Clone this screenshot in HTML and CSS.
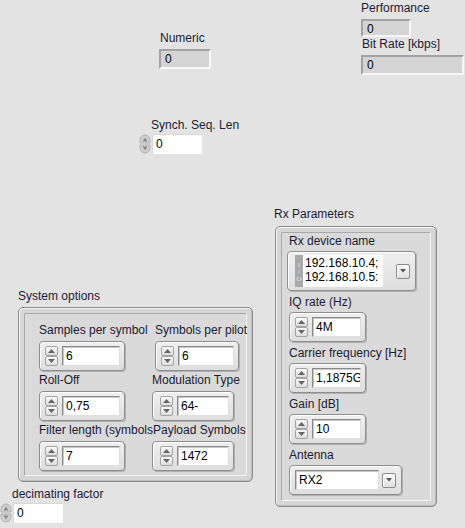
FILE: index.html
```html
<!DOCTYPE html>
<html>
<head>
<meta charset="utf-8">
<link rel="stylesheet" href="styles.css">
</head>
<body>
<div class="panel">

  <div class="item pos-numeric">
    <div class="label">Numeric</div>
    <div class="ind ind-numeric">0</div>
  </div>

  <div class="item pos-perf">
    <div class="label">Performance</div>
    <div class="ind ind-perf">0</div>
    <div class="label lbl-bitrate">Bit Rate [kbps]</div>
    <div class="ind ind-bitrate">0</div>
  </div>

  <div class="item pos-synch">
    <div class="label lbl-classic">Synch. Seq. Len</div>
    <div class="classic">
      <svg class="cspin" width="12" height="20" viewBox="0 0 12 20">
        <path d="M1 9 V6 A5 5 0 0 1 11 6 V9 Z" fill="#cfcfcf" stroke="#b4b4b4"/>
        <path d="M1 11 V14 A5 5 0 0 0 11 14 V11 Z" fill="#cfcfcf" stroke="#b4b4b4"/>
        <path d="M3.5 7.5 L6 3.5 L8.5 7.5 Z" fill="#8a8a8a"/>
        <path d="M3.5 12.5 L6 16.5 L8.5 12.5 Z" fill="#8a8a8a"/>
      </svg>
      <div class="cfield">0</div>
    </div>
  </div>

  <div class="item pos-rx">
    <div class="label">Rx Parameters</div>
    <div class="cluster rx-cluster">
      <div class="cluster-inner rx-inner">
        <div class="label lbl-first">Rx device name</div>
        <div class="ctl ctl-dev">
          <div class="io"><span class="io-txt">I/O</span></div>
          <div class="field field-dev">192.168.10.4;<br>192.168.10.5:</div>
          <div class="drop"><svg width="6" height="4" viewBox="0 0 6 4"><path d="M0 0 H6 L3 3.5 Z" fill="#555"/></svg></div>
        </div>

        <div class="label lbl-gap">IQ rate (Hz)</div>
        <div class="ctl">
          <div class="spin"><span class="sb"><svg width="7" height="4" viewBox="0 0 7 4"><path d="M0 4 L3.5 0 L7 4 Z" fill="#666"/></svg></span><span class="sb"><svg width="7" height="4" viewBox="0 0 7 4"><path d="M0 0 L3.5 4 L7 0 Z" fill="#666"/></svg></span></div>
          <div class="field f49">4M</div>
        </div>

        <div class="label lbl-gap">Carrier frequency [Hz]</div>
        <div class="ctl">
          <div class="spin"><span class="sb"><svg width="7" height="4" viewBox="0 0 7 4"><path d="M0 4 L3.5 0 L7 4 Z" fill="#666"/></svg></span><span class="sb"><svg width="7" height="4" viewBox="0 0 7 4"><path d="M0 0 L3.5 4 L7 0 Z" fill="#666"/></svg></span></div>
          <div class="field f49">1,1875G</div>
        </div>

        <div class="label lbl-gap">Gain [dB]</div>
        <div class="ctl">
          <div class="spin"><span class="sb"><svg width="7" height="4" viewBox="0 0 7 4"><path d="M0 4 L3.5 0 L7 4 Z" fill="#666"/></svg></span><span class="sb"><svg width="7" height="4" viewBox="0 0 7 4"><path d="M0 0 L3.5 4 L7 0 Z" fill="#666"/></svg></span></div>
          <div class="field f49">10</div>
        </div>

        <div class="label lbl-gap">Antenna</div>
        <div class="ctl ctl-ring">
          <div class="field f84">RX2</div>
          <div class="drop"><svg width="6" height="4" viewBox="0 0 6 4"><path d="M0 0 H6 L3 3.5 Z" fill="#555"/></svg></div>
        </div>
      </div>
    </div>
  </div>

  <div class="item pos-sys">
    <div class="label">System options</div>
    <div class="cluster sys-cluster">
      <div class="cluster-inner sys-inner">
        <div class="cell">
          <div class="label">Samples per symbol</div>
          <div class="ctl">
            <div class="spin"><span class="sb"><svg width="7" height="4" viewBox="0 0 7 4"><path d="M0 4 L3.5 0 L7 4 Z" fill="#666"/></svg></span><span class="sb"><svg width="7" height="4" viewBox="0 0 7 4"><path d="M0 0 L3.5 4 L7 0 Z" fill="#666"/></svg></span></div>
            <div class="field f58">6</div>
          </div>
        </div>
        <div class="cell cell-shift">
          <div class="label">Symbols per pilot</div>
          <div class="ctl">
            <div class="spin"><span class="sb"><svg width="7" height="4" viewBox="0 0 7 4"><path d="M0 4 L3.5 0 L7 4 Z" fill="#666"/></svg></span><span class="sb"><svg width="7" height="4" viewBox="0 0 7 4"><path d="M0 0 L3.5 4 L7 0 Z" fill="#666"/></svg></span></div>
            <div class="field f56">6</div>
          </div>
        </div>
        <div class="cell">
          <div class="label">Roll-Off</div>
          <div class="ctl">
            <div class="spin"><span class="sb"><svg width="7" height="4" viewBox="0 0 7 4"><path d="M0 4 L3.5 0 L7 4 Z" fill="#666"/></svg></span><span class="sb"><svg width="7" height="4" viewBox="0 0 7 4"><path d="M0 0 L3.5 4 L7 0 Z" fill="#666"/></svg></span></div>
            <div class="field f58">0,75</div>
          </div>
        </div>
        <div class="cell">
          <div class="label">Modulation Type</div>
          <div class="ctl ctl-c2">
            <div class="spin"><span class="sb"><svg width="7" height="4" viewBox="0 0 7 4"><path d="M0 4 L3.5 0 L7 4 Z" fill="#666"/></svg></span><span class="sb"><svg width="7" height="4" viewBox="0 0 7 4"><path d="M0 0 L3.5 4 L7 0 Z" fill="#666"/></svg></span></div>
            <div class="field f52">64-</div>
          </div>
        </div>
        <div class="cell">
          <div class="label">Filter length (symbols</div>
          <div class="ctl">
            <div class="spin"><span class="sb"><svg width="7" height="4" viewBox="0 0 7 4"><path d="M0 4 L3.5 0 L7 4 Z" fill="#666"/></svg></span><span class="sb"><svg width="7" height="4" viewBox="0 0 7 4"><path d="M0 0 L3.5 4 L7 0 Z" fill="#666"/></svg></span></div>
            <div class="field f58">7</div>
          </div>
        </div>
        <div class="cell">
          <div class="label lbl-payload">Payload Symbols</div>
          <div class="ctl ctl-c2">
            <div class="spin"><span class="sb"><svg width="7" height="4" viewBox="0 0 7 4"><path d="M0 4 L3.5 0 L7 4 Z" fill="#666"/></svg></span><span class="sb"><svg width="7" height="4" viewBox="0 0 7 4"><path d="M0 0 L3.5 4 L7 0 Z" fill="#666"/></svg></span></div>
            <div class="field f52">1472</div>
          </div>
        </div>
      </div>
    </div>
  </div>

  <div class="item pos-dec">
    <div class="label">decimating factor</div>
    <div class="classic">
      <svg class="cspin" width="12" height="20" viewBox="0 0 12 20">
        <path d="M1 9 V6 A5 5 0 0 1 11 6 V9 Z" fill="#cfcfcf" stroke="#b4b4b4"/>
        <path d="M1 11 V14 A5 5 0 0 0 11 14 V11 Z" fill="#cfcfcf" stroke="#b4b4b4"/>
        <path d="M3.5 7.5 L6 3.5 L8.5 7.5 Z" fill="#8a8a8a"/>
        <path d="M3.5 12.5 L6 16.5 L8.5 12.5 Z" fill="#8a8a8a"/>
      </svg>
      <div class="cfield">0</div>
    </div>
  </div>

</div>
</body>
</html>
```

FILE: styles.css
```css
* { box-sizing: border-box; }
html, body { margin: 0; padding: 0; }
body {
  background: #e3e3e3;
  font-family: "Liberation Sans", Arial, sans-serif;
  font-size: 12px;
  color: #000;
}
.panel {
  position: relative;
  width: 465px;
  height: 528px;
  overflow: hidden;
}
.item { position: absolute; }
.label {
  line-height: 15px;
  height: 15px;
  color: #1b1b35;
  white-space: nowrap;
}

/* positions on the free front-panel canvas */
.pos-numeric { left: 159px; top: 31px; }
.pos-numeric .label { padding-left: 1px; }
.pos-perf { left: 361px; top: 1px; }
.pos-synch { left: 139px; top: 118px; }
.pos-rx { left: 274px; top: 207px; }
.pos-sys { left: 18px; top: 289px; }
.pos-dec { left: 0px; top: 487px; }
.pos-dec .label { padding-left: 12px; }

/* indicators */
.ind {
  background: #d4d4d4;
  border: 2px solid;
  border-color: #a2a2a2 #f6f6f6 #f6f6f6 #a2a2a2;
  padding-left: 4px;
  line-height: 17px;
  color: #000;
}
.ind-numeric { width: 52px; height: 20px; margin-top: 3px; }
.ind-perf { width: 50px; height: 18px; margin-top: 3px; line-height: 16px; }
.lbl-bitrate { padding-left: 1px; }
.ind-bitrate { width: 103px; height: 20px; margin-top: 3px; }

/* classic numeric control */
.lbl-classic { padding-left: 12px; }
.classic { display: flex; margin-top: 1px; }
.cspin { display: block; }
.cfield {
  width: 50px;
  height: 20px;
  background: #fff;
  border-top: 1px solid #d8d8d8;
  border-left: 1px solid #d8d8d8;
  padding-left: 3px;
  line-height: 18px;
  margin-left: 1px;
}

/* clusters */
.cluster {
  border: 1px solid #8c8c8c;
  border-radius: 5px;
  background: #d6d6d6;
  padding: 5px;
  box-shadow: inset 1px 1px 0 #f4f4f4, inset -1px -1px 0 #bdbdbd;
}
.cluster-inner {
  height: 100%;
  border: 1px solid;
  border-color: #a9a9a9 #f4f4f4 #f4f4f4 #a9a9a9;
  border-radius: 2px;
  background: #dadada;
}
.rx-cluster { width: 162px; height: 281px; margin-top: 4px; margin-left: 1px; }
.rx-inner {
  display: flex;
  flex-direction: column;
  align-items: flex-start;
  padding: 0 0 0 7px;
}
.rx-inner .lbl-first { margin-top: 1px; }
.rx-inner .ctl { margin-top: 2px; }
.rx-inner .lbl-gap { margin-top: 4px; }
.ctl-dev { margin-left: -2px; }

.sys-cluster { width: 235px; height: 175px; margin-top: 3px; }
.sys-inner {
  display: grid;
  grid-template-columns: 113px 100px;
  row-gap: 2px;
  align-content: start;
  padding: 9px 0 0 14px;
}
.cell { display: flex; flex-direction: column; align-items: flex-start; }
.cell .ctl { margin-top: 3px; }
.cell-shift { padding-left: 3px; }
.lbl-payload { position: relative; left: 1px; }

/* modern controls */
.ctl {
  display: flex;
  align-items: center;
  gap: 4px;
  height: 30px;
  padding: 0 4px 0 5px;
  border: 1px solid #8e8e8e;
  border-radius: 4px;
  background: linear-gradient(#efefef, #dedede);
  box-shadow: inset 1px 1px 0 #fff, 1px 1px 0 #b0b0b0;
}
.spin {
  display: flex;
  flex-direction: column;
  width: 13px;
  height: 20px;
}
.sb {
  display: flex;
  align-items: center;
  justify-content: center;
  height: 10px;
  border: 1px solid #a3a3a3;
  border-radius: 2px;
  background: linear-gradient(#fbfbfb, #dcdcdc);
}
.field {
  height: 20px;
  background: #fff;
  border: 1px solid;
  border-color: #8a8a8a #dedede #dedede #8a8a8a;
  box-shadow: inset 1px 1px 0 #c8c8c8;
  padding-left: 3px;
  line-height: 19px;
  color: #000;
  white-space: nowrap;
  overflow: hidden;
}
.f49 { width: 49px; }
.f52 { width: 52px; }
.f56 { width: 56px; }
.f58 { width: 58px; }
.f84 { width: 84px; }
.ctl-c2 { padding-left: 7px; }

.ctl-dev {
  height: 40px;
  gap: 0;
  padding: 0 5px 0 7px;
}
.io {
  display: flex;
  justify-content: center;
  align-items: center;
  width: 8px;
  height: 32px;
  background: #a9a9a9;
  overflow: hidden;
}
.io-txt {
  writing-mode: vertical-lr;
  text-orientation: upright;
  font-family: "Liberation Serif", serif;
  font-size: 7px;
  line-height: 8px;
  letter-spacing: -1px;
  color: #e6e6e6;
}
.field-dev {
  width: 80px;
  height: 32px;
  line-height: 14px;
  padding-top: 1px;
  border: none;
  box-shadow: none;
  padding-left: 2px;
}
.ctl-dev .drop { margin-left: 13px; }
.ctl-ring { padding: 0 5px 0 5px; gap: 3px; }

.drop {
  display: flex;
  align-items: center;
  justify-content: center;
  width: 14px;
  height: 15px;
  border: 1px solid #8a8a8a;
  border-radius: 2px;
  background: linear-gradient(#fdfdfd, #dedede);
  box-shadow: inset 1px 1px 0 #fff;
}
```
